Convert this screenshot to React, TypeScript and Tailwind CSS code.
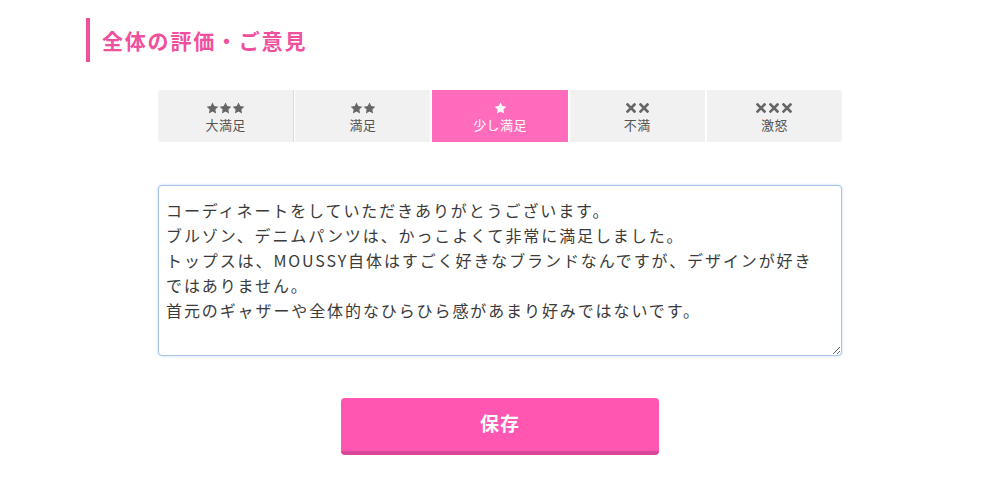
import React from "react";

function Star({ color }: { color: string }) {
  return (
    <svg width="13" height="12" viewBox="0 0 24 23" className="block">
      <path
        d="M12 0.8l3.4 7.1 7.8 1-5.7 5.4 1.4 7.7L12 18.3 5.1 22l1.4-7.7L0.8 8.9l7.8-1z"
        fill={color}
      />
    </svg>
  );
}

function Cross({ color }: { color: string }) {
  return (
    <svg width="10" height="10" viewBox="0 0 10 10" className="block">
      <path d="M1.5 1.5L8.5 8.5M8.5 1.5L1.5 8.5" stroke={color} strokeWidth="2.6" strokeLinecap="square" />
    </svg>
  );
}

const options = [
  { n: 3, label: "大満足", star: true },
  { n: 2, label: "満足", star: true },
  { n: 1, label: "少し満足", star: true, active: true },
  { n: 2, label: "不満", star: false },
  { n: 3, label: "激怒", star: false },
];

const text =
  "コーディネートをしていただきありがとうございます。\nブルゾン、デニムパンツは、かっこよくて非常に満足しました。\nトップスは、MOUSSY自体はすごく好きなブランドなんですが、デザインが好き\nではありません。\n首元のギャザーや全体的なひらひら感があまり好みではないです。";

export default function App() {
  return (
    <div className="min-h-[479px] bg-white">
      <div className="pt-[18px] [font-family:'Noto_Sans_CJK_JP','Noto_Sans',sans-serif]">
        <div className="ml-[86px] flex h-[44px] items-center border-l-[4px] border-[#f0509e] pl-[12px]">
          <h2 className="text-[21px] font-bold leading-none tracking-[1.8px] text-[#f0509e]">
            全体の評価・ご意見
          </h2>
        </div>

        <div className="mx-auto mt-[28px] flex h-[52px] w-[684px] overflow-hidden rounded-[4px] bg-[#f1f1f1]">
          {options.map((o, i) => {
            const c = o.active ? "#ffffff" : "#666666";
            return (
              <div
                key={o.label}
                className={
                  "flex flex-1 flex-col items-center justify-center " +
                  (i > 0 ? "border-l border-white " : "") +
                  (i < options.length - 1 ? "border-r border-[#d9d9d9] " : "") +
                  (o.active ? "bg-[#ff6cbb] text-white" : "text-[#555]")
                }
              >
                <div className={"flex h-[12px] items-center " + (o.star ? "gap-0" : "gap-[3px]")}>
                  {Array.from({ length: o.n }).map((_, k) =>
                    o.star ? <Star key={k} color={c} /> : <Cross key={k} color={c} />
                  )}
                </div>
                <div className="mt-[4px] text-[13px] leading-none tracking-[0.4px]">
                  {o.label}
                </div>
              </div>
            );
          })}
        </div>

        <div className="mx-auto mt-[43px] w-[684px]">
          <textarea
            defaultValue={text}
            className="block h-[171px] w-full resize-y rounded-[4px] border border-[#a9c4ea] bg-white pl-[7px] pr-[4px] pt-[12px] text-[16px] leading-[25px] tracking-[1.9px] text-[#3a3a3a] shadow-[0_0_3px_#c3d6f2] outline-none [font-family:'Noto_Sans_CJK_JP','Noto_Sans',sans-serif]"
          />
        </div>

        <div className="mt-[42px] flex justify-center">
          <button className="h-[57px] w-[318px] rounded-[4px] border-b-[4px] border-[#d9479a] pb-[2px] bg-[#ff57b1] text-[19px] font-bold tracking-[1px] text-white">
            保存
          </button>
        </div>
      </div>
    </div>
  );
}
